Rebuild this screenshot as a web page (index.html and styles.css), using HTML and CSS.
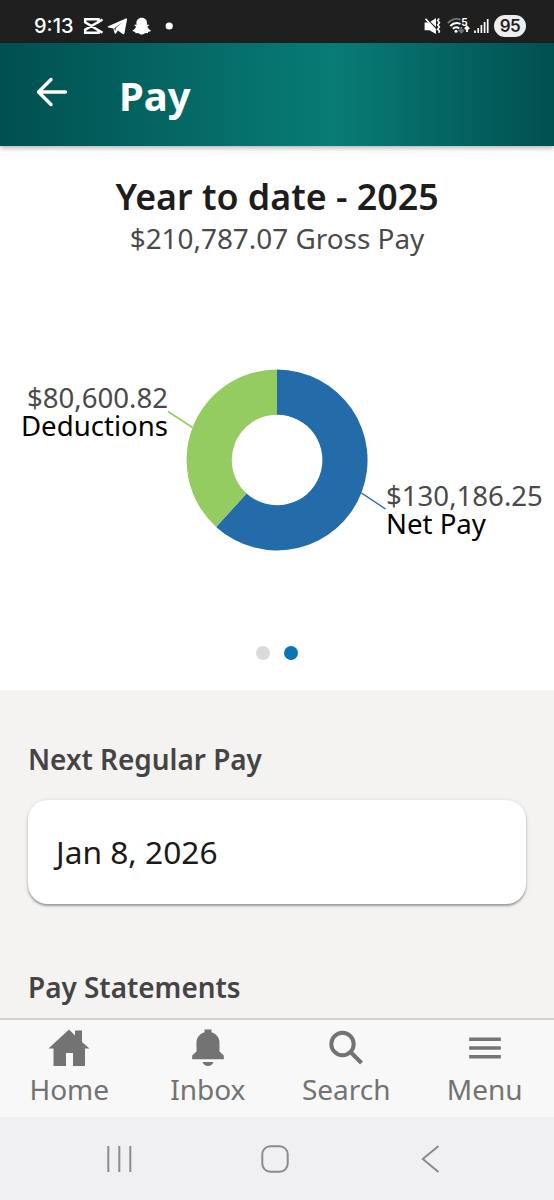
FILE: index.html
```html
<!DOCTYPE html>
<html lang="en">
<head>
    <meta charset="UTF-8">
    <meta name="viewport" content="width=device-width, initial-scale=1.0">
    <title>Pay</title>
    <link rel="stylesheet" href="styles.css">
</head>
<body>

    <!-- ===== STATUS BAR ===== -->
    <div class="status-bar">
        <div class="status-left">
            <span class="clock">9:13</span>
            <svg width="92" height="20" viewBox="0 0 92 20">
                <path fill="none" stroke="#fff" stroke-width="2.5" d="M19.500 3.500 15.500 6V3.200H2.200v3L19.500 16.800M19.500 3.500 2.200 13.800v3H15.500v-2.600"/>
                <path fill="#fff" d="M25.2 10.3 42.8 2.6c.9-.3 1.4.2 1.2 1.200l-2.600 13.600c-.2 1-.9 1.200-1.700.7l-4.800-3.600-2 2.900c-.5.6-1.100.5-1.300-.3l-1.300-4.500-5-1.200c-.7-.2-.7-.8-.1-1.100Zm6 2.200 1.100 2.800.4-3 6.200-6.100Z"/>
                <path fill="#fff" d="M58.700 1.700c3.300 0 5.300 2.300 5.300 5.200l-.1 2 1.600-.3c.8.4.6 1.300-1.200 2 .6 2 1.800 3 3.600 3.800-.3 1.100-1.600 1.300-2.600 1.400l-.5 1.400-2.300-.2c-1.300.8-2.300 1.500-3.800 1.500s-2.500-.7-3.800-1.500l-2.300.2-.5-1.400c-1-.1-2.300-.3-2.600-1.400 1.800-.8 3-1.800 3.600-3.800-1.800-.7-2-1.600-1.200-2l1.600.3-.1-2c0-2.900 2-5.200 5.300-5.200Z"/>
                <circle cx="86.200" cy="10" r="3.600" fill="#fff"/>
            </svg>
        </div>
        <div class="status-right">
            <!-- muted / vibrate -->
            <svg width="17" height="18" viewBox="0 0 17 18">
                <path fill="#fff" d="M.6 5.500h3l2.200 1.500 6.200 6.500v3.500L5.500 13.300H.6ZM6.500 4.700l5.500-3.800v9.200Z"/>
                <path fill="none" stroke="#fff" stroke-width="1.600" d="m1.500 1.800 10.400 11.300M15.200 1.500l-1.500 2 1.700 2.200-1.700 2.200 1.700 2.200-1.700 2.200 1.700 1.800-.6 1.700"/>
            </svg>
            <!-- wifi 5 -->
            <svg class="wifi" width="23" height="18" viewBox="0 0 23 18">
                <g fill="none" stroke-width="1.900">
                    <path stroke="#777" d="M.8 6.200C4.500 2.200 9 1 13.500 2.600"/>
                    <path stroke="#fff" d="M3.300 9C6.200 6 9.700 5.300 13.600 7M5.800 11.800c2-1.800 4.400-1.800 6.500-.3"/>
                    <path stroke="#777" d="M14.300 10v5m-2.500-2.200 2.500 2.500 2.500-2.500"/>
                    <path stroke="#fff" d="M20 15v-5m-2.200 2L20 9.700l2.200 2.300"/>
                </g>
                <circle cx="9" cy="14.200" r="1.500" fill="#fff"/>
                <text x="14.300" y="8.500" class="wifi-gen">5</text>
            </svg>
            <svg width="15" height="18" viewBox="0 0 15 18">
                <path stroke="#fff" stroke-width="1.700" d="M1 13.500V16M4.200 11v5M7.400 8v8M10.600 5v11M13.700 2v14"/>
            </svg>
            <span class="battery">95</span>
        </div>
    </div>

    <!-- ===== HEADER ===== -->
    <header class="header">
        <svg class="back" width="32" height="30" viewBox="0 0 32 30">
            <path d="M29.500 15H2.500M15 2.500 2.500 15 15 27.500"/>
        </svg>
        <h1>Pay</h1>
    </header>

    <!-- ===== YEAR TO DATE ===== -->
    <section class="summary">
        <h2>Year to date - 2025</h2>
        <p class="gross">$210,787.07 Gross Pay</p>

        <svg class="chart" width="554" height="260" viewBox="0 330 554 260">
            <path fill="#236ba9" d="M277 369.500A90.500 90.500 0 1 1 216.100 526.900L246.600 493.500A45.300 45.300 0 1 0 277 414.700Z"/>
            <path fill="#94cc61" d="M216.100 526.900A90.500 90.500 0 0 1 277 369.500V414.700A45.300 45.300 0 0 0 246.600 493.500Z"/>
            <path class="leader" stroke="#94cc61" d="M168 411.500 192.500 427.500"/>
            <path class="leader" stroke="#236ba9" d="M361.500 493 385.500 509"/>
            <text class="amount" x="168" y="408" text-anchor="end">$80,600.82</text>
            <text x="168" y="436" text-anchor="end">Deductions</text>
            <text class="amount" x="386" y="506">$130,186.25</text>
            <text x="386" y="534">Net Pay</text>
        </svg>

        <div class="dots">
            <span class="dot"></span>
            <span class="dot active"></span>
        </div>
    </section>

    <!-- ===== PAY DETAILS ===== -->
    <main class="details">
        <h3>Next Regular Pay</h3>
        <div class="card">Jan 8, 2026</div>
        <h3>Pay Statements</h3>
    </main>

    <!-- ===== TABS ===== -->
    <nav class="tabs">
        <a class="tab">
            <svg width="42" height="38" viewBox="0 0 42 38"><path d="M21 .5 27 6.500V1.500h7v11.500l7.500 6.500H37v17.500H25V24h-7v13H5.500V19.500H.5Z"/></svg>
            Home
        </a>
        <a class="tab">
            <svg width="42" height="38" viewBox="0 0 42 38"><path d="M17.500.500h7V3.300C29.500 5 32.500 8.500 32.500 14v8.500l4.300 4v3.800H5.200v-3.800l4.300-4V14c0-5.500 3-9 8-10.700ZM15.500 33h11c-1 2.600-3 4-5.500 4s-4.500-1.400-5.500-4Z"/></svg>
            Inbox
        </a>
        <a class="tab">
            <svg width="42" height="38" viewBox="0 0 42 38"><g fill="none" stroke="#737373" stroke-width="4"><circle cx="17.500" cy="15" r="11.200"/><path d="M25.500 23 36.500 34"/></g></svg>
            Search
        </a>
        <a class="tab">
            <svg width="42" height="38" viewBox="0 0 42 38"><path d="M5.200 8.500h31.600v3.600H5.200ZM5.200 17.200h31.600v3.600H5.200ZM5.200 26h31.600v3.600H5.200Z"/></svg>
            Menu
        </a>
    </nav>

    <!-- ===== SYSTEM NAVIGATION ===== -->
    <div class="system-nav">
        <svg width="28" height="28" viewBox="0 0 28 28"><path d="M2.300 1v26M13.300 1v26M24.300 1v26"/></svg>
        <svg width="28" height="28" viewBox="0 0 28 28"><rect x="1.300" y="1.300" width="25.400" height="25.400" rx="8"/></svg>
        <svg width="28" height="28" viewBox="0 0 28 28"><path d="M22.500 1 6.800 14l15.700 13"/></svg>
    </div>

</body>
</html>
```

FILE: styles.css
```css
* { box-sizing: border-box; margin: 0; padding: 0; }
body {
    display: flex; flex-direction: column;
    height: 1200px; overflow: hidden;
    font-family: "Noto Sans", sans-serif;
    background: #fff; color: #1d1d1d;
}
svg { display: block; flex: none; }

/* --- Status bar --- */
.status-bar {
    display: flex; justify-content: space-between; align-items: center;
    height: 43px; padding: 9px 28px 0 34px;
    background: #1f1f1f; color: #fff;
}
.status-left, .status-right { display: flex; align-items: center; }
.clock {
    width: 49px; font: 500 20px/24px Inter, sans-serif;
}
.wifi { margin: 0 4px 0 6px; }
.wifi-gen { font: bold 10px Inter, sans-serif; fill: #fff; }
.battery {
    width: 32px; height: 22px; margin-left: 5px; border-radius: 11px;
    background: #eee; color: #1f1f1f; text-align: center;
    font: 600 17px/22px Inter, sans-serif; letter-spacing: -0.5px;
}

/* --- Header --- */
.header {
    display: flex; align-items: center;
    height: 103px; padding-left: 36px; z-index: 1;
    background: linear-gradient(90deg, #005050 0%, #087c76 60%, #005050 100%);
    box-shadow: 0 2px 5px rgba(0, 0, 0, 0.3);
}
.back {
    margin: -6px 51px 0 0;
    fill: none; stroke: #fff; stroke-width: 3.4;
    stroke-linecap: round; stroke-linejoin: round;
}
.header h1 { color: #fff; font-size: 40px; line-height: 54px; margin-top: 3px; }

/* --- Year to date --- */
.summary {
    display: flex; flex-direction: column; align-items: center;
    height: 544px; padding-top: 26px;
}
.summary h2 { font-size: 35.8px; font-weight: 600; line-height: 48px; }
.gross { font-size: 27.9px; line-height: 36px; color: #4a4a4a; }
.chart { margin-top: 74px; font-size: 27.6px; fill: #000; }
.amount { fill: #4a4a4a; }
.leader { fill: none; stroke-width: 1.5; }
.dots { display: flex; gap: 14px; margin-top: 56px; }
.dot { width: 14px; height: 14px; border-radius: 50%; background: #dadada; }
.dot.active { background: #0875b5; }

/* --- Details --- */
.details {
    height: 328px; padding: 49px 28px 0;
    background: #f4f3f2;
}
.details h3 { font-size: 27.9px; font-weight: 600; line-height: 40px; color: #444; }
.card {
    height: 104px; margin: 21px 0 63px; padding: 0 28px;
    border-radius: 20px; background: #fff;
    font-size: 31.7px; line-height: 104px; color: #1a1a1a;
    box-shadow: 0 2px 2px rgba(0, 0, 0, 0.3), 0 1px 5px rgba(0, 0, 0, 0.12);
}

/* --- Tabs --- */
.tabs {
    display: flex; height: 99px; padding-top: 9px;
    border-top: 2px solid #d2d2d3; background: #f8f8f8;
}
.tab {
    flex: 1; display: flex; flex-direction: column; align-items: center;
    font-size: 28px; line-height: 44px; color: #737373;
}
.tab svg { fill: #737373; }

/* --- System navigation --- */
.system-nav {
    display: flex; justify-content: center; gap: 127px;
    height: 83px; padding: 28px 4px 0 0;
    background: #f0f0f2;
}
.system-nav svg { fill: none; stroke: #8b8b8d; stroke-width: 2; }
```
